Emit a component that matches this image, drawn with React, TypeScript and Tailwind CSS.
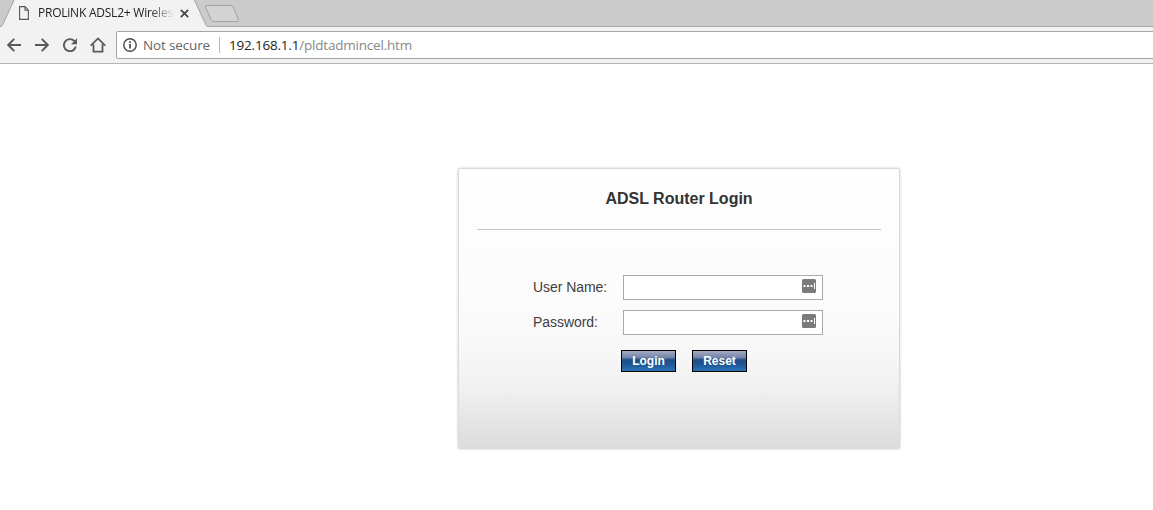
import { useState } from "react";

interface CredentialFieldProps {
  id: string;
  label: string;
  type: "text" | "password";
  value: string;
  onChange: (value: string) => void;
}

const BUTTON_CLASS =
  "h-[22px] w-[55px] border border-black bg-[linear-gradient(to_bottom,#a3abc0_0%,#7585aa_32%,#1f4f84_44%,#1c5390_62%,#2a74b8_100%)] text-center text-[12px] leading-[20px] font-bold text-white";

function TabStrip() {
  return (
    <div className="flex h-[27px] border-b border-[#a9a9a9] bg-[#cbcbcb]">
      <div className="relative h-[27px] w-[208px] shrink-0">
        <svg className="absolute inset-0" width="208" height="27" viewBox="0 0 208 27" fill="none">
          <path d="M0 27L2 26L14.5 -1H194L206 25L208 27Z" fill="#f2f2f2" />
          <path d="M0 26.5Q2 26.5 3 24L14.5 -1M194 -1L205.5 24Q206.5 26.5 208 26.5" stroke="#a2a2a2" />
        </svg>
        <div className="relative flex h-[26px] items-center pl-[19px]">
          <svg width="10" height="14" viewBox="0 0 10 14" fill="none" stroke="#555" strokeWidth="1.1">
            <path d="M.6 .6H6L9.4 4.2V13.4H.6ZM6 .6V4.2H9.4" />
          </svg>
          <span className="ml-[9px] w-[136px] overflow-hidden font-['Open_Sans',sans-serif] text-[12px] leading-[16px] tracking-[-0.23px] whitespace-nowrap text-[#222] [mask-image:linear-gradient(to_right,#000_112px,transparent_136px)]">
            PROLiNK ADSL2+ Wireless
          </span>
          <svg className="ml-[6px]" width="9" height="9" viewBox="0 0 9 9" stroke="#444" strokeWidth="1.7">
            <path d="M.8 .8L8.2 8.2M8.2 .8L.8 8.2" />
          </svg>
        </div>
      </div>
      <svg className="-ml-[4px] mt-[4px]" width="36" height="19" viewBox="0 0 36 19" fill="#d3d3d3" stroke="#a2a2a2">
        <path d="M2.5 1.5H27Q28.5 1.5 29.2 3L34.3 15.5Q35 17.5 33.5 17.5H9.5Q8 17.5 7.2 16L1.5 3Q.8 1.5 2.5 1.5Z" />
      </svg>
    </div>
  );
}

function Toolbar() {
  return (
    <div className="flex h-[37px] items-start border-b border-[#b5b5b5] bg-[#f2f2f2] pt-[4px] pl-[7px]">
      <div className="flex h-[28px] items-center gap-[14px] text-[#5a5a5a]">
        <svg width="14" height="14" viewBox="0 0 14 14" fill="none" stroke="currentColor" strokeWidth="1.9">
          <path d="M14 7H1.5M7.3 .8L1.2 7L7.3 13.2" />
        </svg>
        <svg width="14" height="14" viewBox="0 0 14 14" fill="none" stroke="currentColor" strokeWidth="1.9">
          <path d="M0 7H12.5M6.7 .8L12.8 7L6.7 13.2" />
        </svg>
        <svg width="14" height="14" viewBox="0 0 14 14" fill="none" stroke="currentColor" strokeWidth="1.9">
          <path d="M11.4 3.1A6 6 0 1 0 12.8 8.5" />
          <path d="M14 .2V6.2H8Z" fill="currentColor" stroke="none" />
        </svg>
        <svg className="-ml-px" width="16" height="16" viewBox="0 0 16 16" fill="none" stroke="currentColor" strokeWidth="1.8">
          <path d="M.7 8.7L8 1.4L15.3 8.7M3.5 7.2V14.6H12.5V7.2" />
        </svg>
      </div>
      <div className="-mr-[2px] ml-[10px] flex h-[28px] flex-1 items-center rounded-l-[2px] border border-[#a6a6a6] bg-white pl-[6px] font-['Open_Sans',sans-serif] text-[13.5px] leading-[18px] whitespace-nowrap">
        <svg width="14" height="14" viewBox="0 0 14 14" fill="none" stroke="#4a4a4a">
          <circle cx="7" cy="7" r="6.2" strokeWidth="1.4" />
          <path d="M7 6V10.6M7 3.3V4.9" strokeWidth="1.7" />
        </svg>
        <span className="ml-[6px] w-[68px] tracking-[-0.15px] text-[#666]">Not secure</span>
        <span className="ml-[8px] h-[16px] w-px bg-[#b4b4b4]" />
        <span className="ml-[9px] tracking-[-0.2px] text-[#888]">
          <span className="text-[#222]">192.168.1.1</span>/pldtadmincel.htm
        </span>
      </div>
    </div>
  );
}

function CredentialField({ id, label, type, value, onChange }: CredentialFieldProps) {
  return (
    <div className="flex h-[25px] items-center">
      <label htmlFor={id} className="w-[90px] pb-[2px] text-[14px] leading-[16px] tracking-[-0.05px] text-[#404040]">
        {label}
      </label>
      <div className="flex h-[25px] w-[200px] border border-[#a9a9a9] bg-white">
        <input
          id={id}
          type={type}
          value={value}
          onChange={(event) => onChange(event.target.value)}
          className="w-[178px] px-1 text-[14px] outline-none"
        />
        <svg className="mt-[3px]" width="14" height="14" viewBox="0 0 14 14">
          <rect width="14" height="14" rx="1.5" fill="#7b7b7b" />
          <path d="M1.5 6H3.5V8H1.5ZM5 6H7V8H5ZM8.5 6H10.5V8H8.5ZM12 4H13V10H12Z" fill="#fff" />
        </svg>
      </div>
    </div>
  );
}

export default function App() {
  const [userName, setUserName] = useState("");
  const [password, setPassword] = useState("");

  const onReset = () => {
    setUserName("");
    setPassword("");
  };

  return (
    <div className="flex h-[510px] w-[1153px] flex-col overflow-hidden bg-white">
      <TabStrip />
      <Toolbar />
      <main className="flex flex-1 items-start pt-[104px] pl-[458px] font-['Liberation_Sans',Arial,sans-serif]">
        <form
          onSubmit={(event) => event.preventDefault()}
          className="h-[281px] w-[442px] rounded-[2px] border border-[#dadada] bg-[linear-gradient(to_bottom,#fefefe_0%,#fcfcfc_45%,#f8f8f8_65%,#efefef_80%,#dcdcdc_100%)] px-[18px] shadow-[0_0_3px_rgba(0,0,0,0.2)]"
        >
          <h1 className="h-[61px] border-b border-[#c9c9c9] pt-[21px] text-center text-[16px] leading-[18px] font-bold text-[#333]">
            ADSL Router Login
          </h1>
          <div className="mt-[45px] ml-[56px] flex flex-col gap-[10px]">
            <CredentialField id="username" label="User Name:" type="text" value={userName} onChange={setUserName} />
            <CredentialField id="password" label="Password:" type="password" value={password} onChange={setPassword} />
          </div>
          <div className="mt-[15px] ml-[144px] flex gap-[16px]">
            <button type="submit" className={BUTTON_CLASS}>
              Login
            </button>
            <button type="button" onClick={onReset} className={BUTTON_CLASS}>
              Reset
            </button>
          </div>
        </form>
      </main>
    </div>
  );
}
